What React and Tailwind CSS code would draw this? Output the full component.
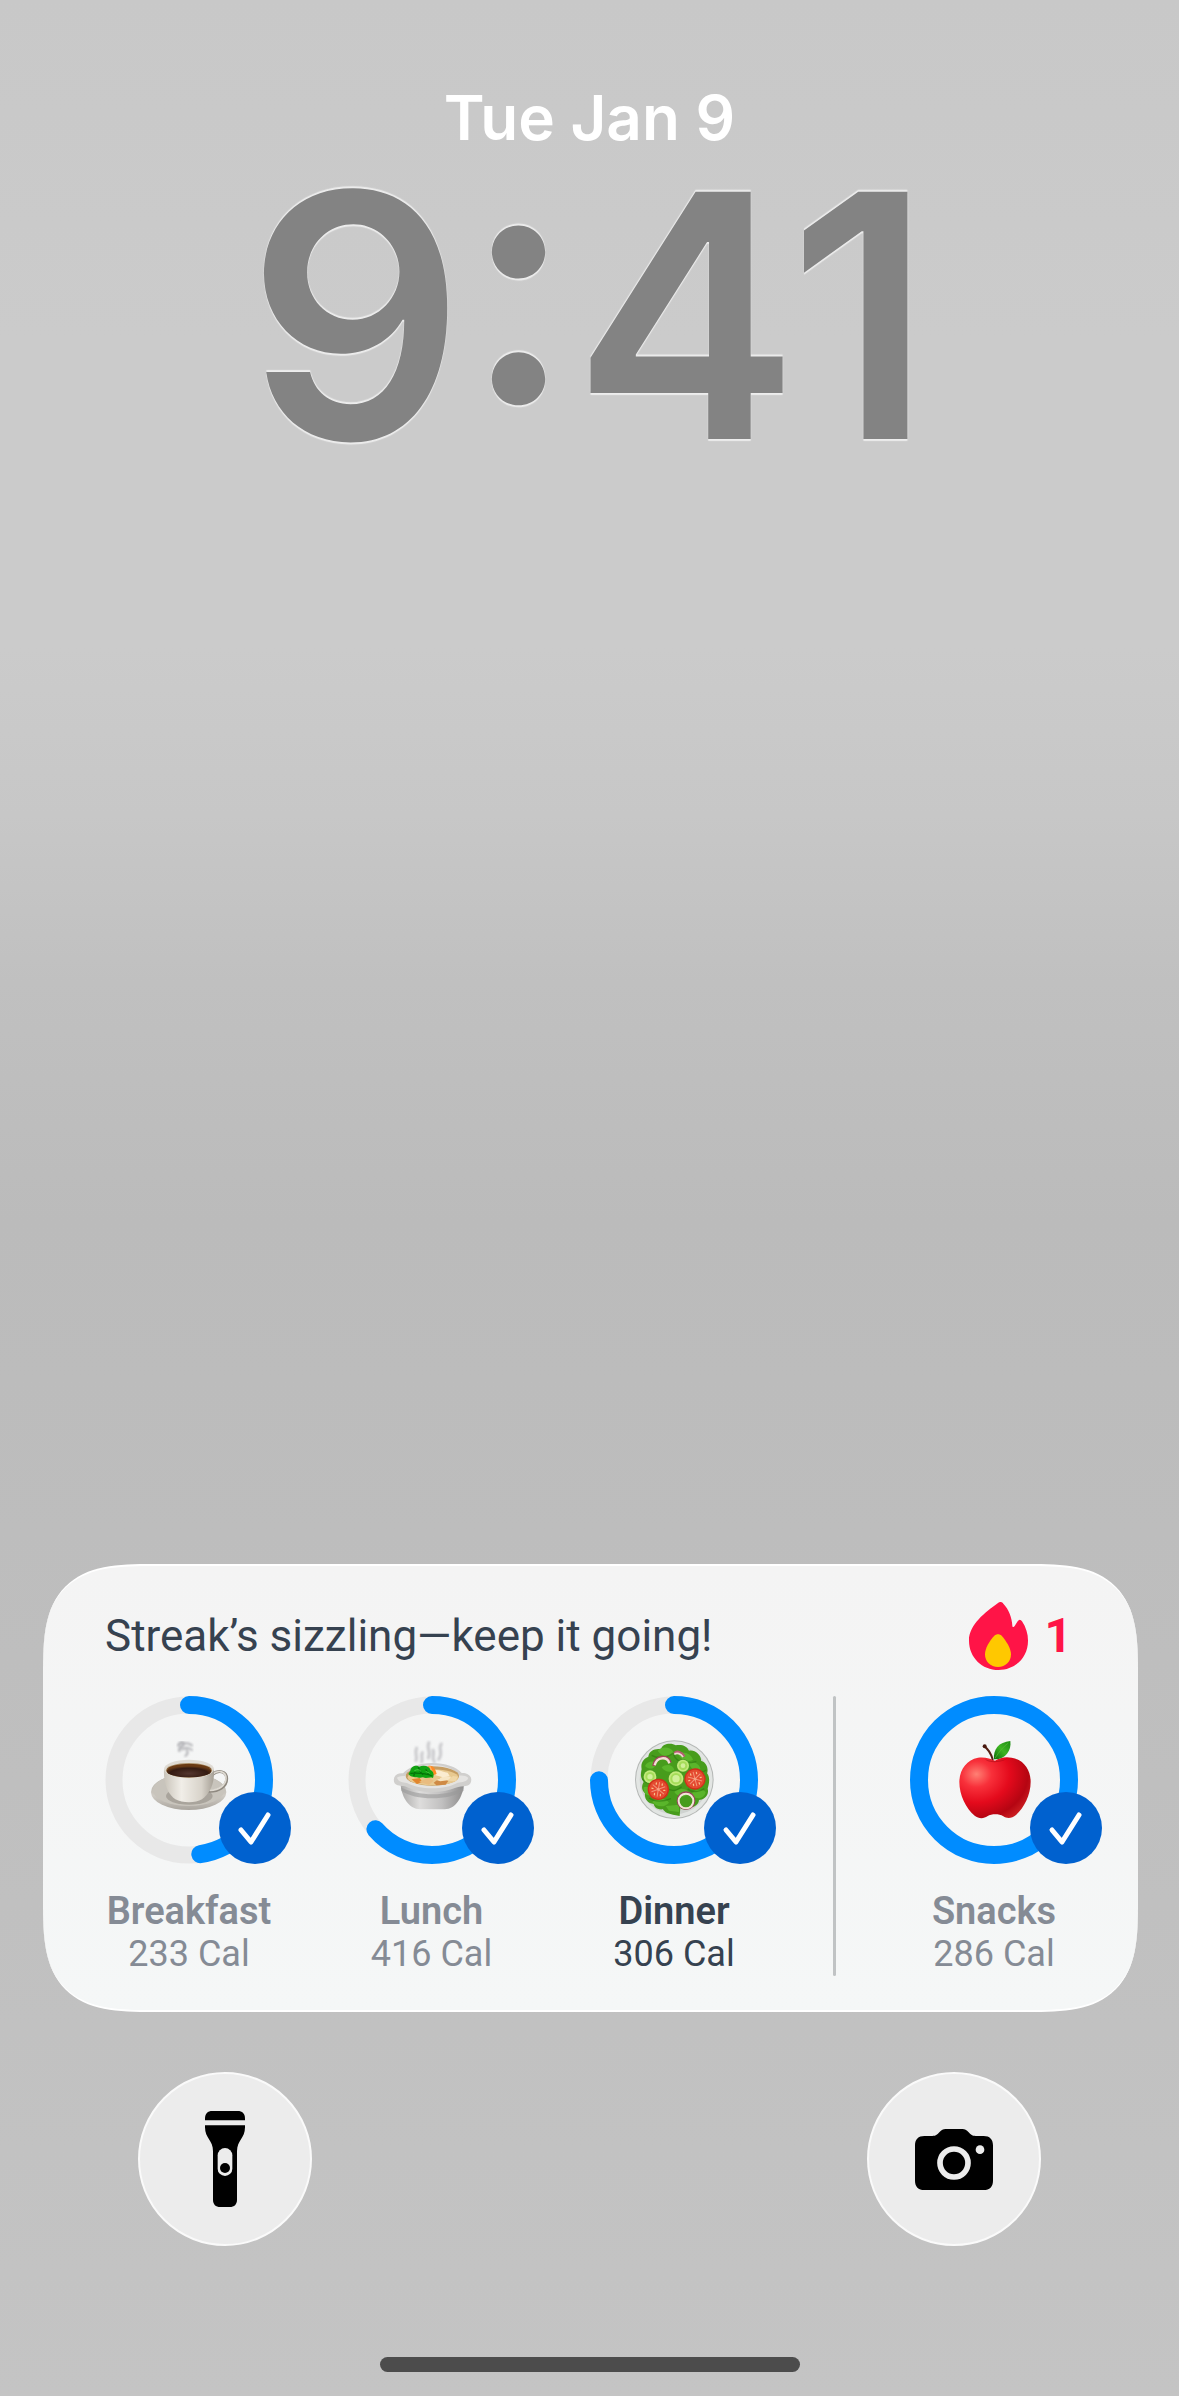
import { clsx } from 'clsx'

const RING_RADIUS = 75
const RING_LENGTH = 2 * Math.PI * RING_RADIUS

const meals = [
  { name: 'Breakfast', calories: 233, progress: 0.475, Icon: CoffeeIcon },
  { name: 'Lunch', calories: 416, progress: 0.635, Icon: SoupIcon },
  { name: 'Dinner', calories: 306, progress: 0.748, Icon: SaladIcon, current: true },
]

const snacks = { name: 'Snacks', calories: 286, progress: 1, Icon: AppleIcon }

function CoffeeIcon() {
  return (
    <g transform="translate(25 24) scale(0.33333)">
      <defs>
        <linearGradient id="cup" x1="0" x2="1">
          <stop offset="0" stopColor="#c9c4ba" />
          <stop offset="0.35" stopColor="#f1eee8" />
          <stop offset="0.75" stopColor="#d8d3ca" />
          <stop offset="1" stopColor="#a59f95" />
        </linearGradient>
        <linearGradient id="saucer" x1="0" y1="0" x2="0" y2="1">
          <stop offset="0" stopColor="#aaa59d" />
          <stop offset="0.6" stopColor="#cfcbc4" />
          <stop offset="1" stopColor="#aaa59e" />
        </linearGradient>
        <radialGradient id="coffee" cx="0.5" cy="0.7" r="0.6">
          <stop offset="0" stopColor="#54362f" />
          <stop offset="0.7" stopColor="#351b12" />
          <stop offset="1" stopColor="#6b3d17" />
        </radialGradient>
        <filter id="steam">
          <feGaussianBlur stdDeviation="3" />
        </filter>
      </defs>
      <g fill="none" stroke="#b4b4b8" strokeLinecap="round" filter="url(#steam)">
        <path d="M145 76c6-12 15-10 16-4s-15 9-13 20" strokeWidth="8" />
        <path d="M164 70c8-2 14 0 22 6M158 88c8-6 14-8 28 2M166 108c8-6 8-12 4-18" strokeWidth="6" />
      </g>
      <ellipse cx="176" cy="216" rx="113" ry="54" fill="url(#saucer)" />
      <ellipse cx="176" cy="210" rx="108" ry="48" fill="#c8c4bc" />
      <ellipse cx="178" cy="228" rx="70" ry="26" fill="#8f8a81" opacity="0.55" />
      <path d="M247 164c18-16 43-10 43 12 0 24-24 38-52 38" fill="none" stroke="#8f8980" strokeWidth="9" strokeLinecap="round" />
      <path d="M247 163c18-15 41-9 41 12 0 22-22 35-48 36" fill="none" stroke="#dedad2" strokeWidth="5" strokeLinecap="round" />
      <path d="M102 148c-2 34 8 72 34 90 22 12 60 12 80 0 28-20 38-56 36-90z" fill="url(#cup)" />
      <ellipse cx="177" cy="147" rx="75" ry="28" fill="#dfdbd4" />
      <ellipse cx="177" cy="151" rx="69" ry="22" fill="#a78a62" />
      <ellipse cx="177" cy="153" rx="67" ry="19" fill="url(#coffee)" />
      <path d="M110 148c15-20 118-22 135 0-22-12-110-12-135 0z" fill="#6a3a14" />
    </g>
  )
}

function SoupIcon() {
  return (
    <g transform="translate(21 24) scale(0.33333)">
      <defs>
        <linearGradient id="bowl" x1="0" x2="1">
          <stop offset="0" stopColor="#aaa9a8" />
          <stop offset="0.3" stopColor="#dedddc" />
          <stop offset="0.65" stopColor="#c1c0c0" />
          <stop offset="1" stopColor="#8e8d8d" />
        </linearGradient>
      </defs>
      <g fill="none" stroke="#cbcbce" strokeWidth="9" strokeLinecap="round" filter="url(#steam)">
        <path d="M143 84c-8 16 4 22-2 38M160 98c-5 10 2 18-2 28M180 68c-10 16 8 26-2 46" />
        <path d="M192 90c6 12-6 20 4 36M217 72c-12 14 8 24-8 46" />
      </g>
      <path d="M95 196c4 38 26 72 58 72h74c32 0 52-34 58-72z" fill="url(#bowl)" />
      <path d="M96 202c50 28 142 28 188 0v10c-44 30-146 30-187 0z" fill="#999" opacity="0.6" />
      <path d="M76 172c4-10 16-14 26-12 18-20 50-31 88-31s72 11 88 30c12-1 24 4 28 14 3 12-2 21-12 24-14 2-24 2-34 6-38 17-104 17-142 0-12-5-20-5-32-7-10-4-14-12-10-24z" fill="#d0cfcd" />
      <path d="M84 173c6-5 16-5 24-5 12-19 46-33 82-33s72 14 82 32c10-1 20 1 26 7-4 12-18 12-32 14-40 22-112 22-152 1-14-2-26-3-30-16z" fill="#e5e4e2" />
      <ellipse cx="190" cy="168" rx="80" ry="29" fill="#c59d62" />
      <ellipse cx="192" cy="172" rx="76" ry="24" fill="#e8c990" />
      <path d="M118 172l14-10 20 14-8 14z" fill="#f0c987" />
      <path d="M128 178l24-4 8 12-16 6z" fill="#e1862e" />
      <path d="M150 186l28-14 16 10-14 12z" fill="#e9bc80" />
      <path d="M194 188l18-14 28 6-10 14-28 2z" fill="#cf8a45" />
      <path d="M202 180l24-12 20 2-4 10-28 4z" fill="#f7e6c4" />
      <path d="M198 150c16-2 28 8 38 8l6 10-20 4-22-6z" fill="#faecd0" />
      <path d="M234 182l18-14 14 2-6 14z" fill="#f0d7a6" />
      <path d="M177 138c12-4 22 4 26 24l-12 4c-2-12-6-18-14-28z" fill="#ff8a24" />
      <path d="M182 138l10 24" stroke="#ffb261" strokeWidth="4" />
      <path d="M124 152c2-16 20-18 26-12 18-6 32 0 34 10 10 4 12 14 8 24-12-4-20 4-30-2-12 4-18-2-24 0-10-2-16-4-20-10z" fill="#11a312" />
      <path d="M124 160c24-2 42-2 66 8M148 142c4 10 6 16 14 22M170 148l10 16M138 156l-4 12" fill="none" stroke="#057308" strokeWidth="4" />
      <path d="M136 152c10-4 14-4 20 2M170 154l12 6" stroke="#45cc3f" strokeWidth="3" fill="none" />
    </g>
  )
}

function TomatoSlice({ x, y, angle }) {
  return (
    <g transform={`translate(${x} ${y}) rotate(${angle})`}>
      <circle r="32" fill="#cf2f1a" />
      <circle r="28" fill="#e44a30" />
      <path d="M0-22V22M-19-11L19 11M-19 11L19-11" stroke="#f2937a" strokeWidth="3" />
      <g fill="#f9c48e">
        <ellipse cx="9" cy="-16" rx="2" ry="4" />
        <ellipse cx="-9" cy="-16" rx="2" ry="4" />
        <ellipse cx="9" cy="16" rx="2" ry="4" />
        <ellipse cx="-9" cy="16" rx="2" ry="4" />
        <ellipse cx="18" cy="0" rx="4" ry="2" />
        <ellipse cx="-18" cy="0" rx="4" ry="2" />
      </g>
      <circle r="4" fill="#f7a283" />
    </g>
  )
}

function CucumberSlice({ x, y, r }) {
  return (
    <g transform={`translate(${x} ${y})`}>
      <circle r={r} fill="#4e9a25" />
      <circle r={r - 2} fill="#c3ea7c" />
      <circle r={r - 7} fill="#a5dc59" />
      <circle r={r - 13} fill="#d1f09a" />
    </g>
  )
}

function SaladIcon() {
  return (
    <g transform="translate(19 14) scale(0.33333)">
      <circle cx="196" cy="209" r="118" fill="#b5b8b6" />
      <circle cx="196" cy="209" r="115" fill="#e2e5e3" />
      <circle cx="196" cy="209" r="104" fill="#cfd3d0" />
      <path d="M118 140c2-18 22-26 38-22 4-20 34-20 44-12 18-4 34 2 40 16 18-4 38 14 36 30 20 6 22 28 18 38 12 16 4 36 2 46 6 22-14 34-26 34-2 18-20 24-30 20-6 12-22 8-26 4l-2 24-20-4c-14-2-26-8-30-16-22 2-26-10-28-16-20-2-28-18-26-32-14-14-8-26-4-34-12-16-8-28-6-38-4-20 6-32 20-38z" fill="#479c1c" />
      <g fill="#5ab52b">
        <path d="M146 122c14-14 40-12 48 6-12 14-36 14-48-6z" />
        <path d="M206 130c20-8 42 2 46 20-18 8-38 0-46-20z" />
        <path d="M108 168c6-14 24-18 34-8-2 16-20 22-34 8z" />
        <path d="M240 158c16-6 34 6 34 20-14 8-30 0-34-20z" />
        <path d="M104 232c12-6 22 2 22 24-14 4-24-10-22-24z" />
        <path d="M130 276c14-14 42-12 50 2-12 14-36 16-50-2z" />
        <path d="M196 246c14-14 40-10 46 4-14 14-36 12-46-4z" />
        <path d="M246 254c8-16 32-20 44-8-4 20-26 26-44 8z" />
        <path d="M158 172c14-12 34-8 38 8-12 10-30 6-38-8z" />
        <path d="M170 288l40-4v22l-30-4z" />
      </g>
      <g fill="none" stroke="#2c780f" strokeWidth="4" opacity="0.6">
        <path d="M128 136c20 12 50 6 66-8M194 134c8 20 34 32 68 20M100 206c14 20 24 12 38 6" />
        <path d="M164 224c18 24 36 20 54 6M120 264c20 14 46 10 66 2M236 236c14 14 36 10 50 0M260 180c14 8 24 6 32 0" />
      </g>
      <path d="M134 168c6-32 44-34 50-10" fill="none" stroke="#9e455a" strokeWidth="9" />
      <path d="M137 166c6-26 38-28 44-6" fill="none" stroke="#f3ddd5" strokeWidth="7" />
      <path d="M196 130c8-8 22-4 30 10" fill="none" stroke="#b65c72" strokeWidth="8" />
      <path d="M196 133c8-6 20-2 26 8" fill="none" stroke="#f1d6d3" strokeWidth="5" />
      <CucumberSlice x={222} y={167} r={20} />
      <CucumberSlice x={123} y={200} r={21} />
      <CucumberSlice x={201} y={206} r={24} />
      <TomatoSlice x={148} y={238} angle={10} />
      <TomatoSlice x={258} y={207} angle={-15} />
      <circle cx="231" cy="272" r="25" fill="none" stroke="#97445b" strokeWidth="6" />
      <circle cx="231" cy="273" r="22" fill="none" stroke="#f2e4d6" strokeWidth="6" />
    </g>
  )
}

function AppleIcon() {
  return (
    <g transform="translate(20 14) scale(0.33333)">
      <defs>
        <radialGradient id="apple" cx="0.24" cy="0.28" r="0.85">
          <stop offset="0" stopColor="#ff8074" />
          <stop offset="0.25" stopColor="#f8303a" />
          <stop offset="0.55" stopColor="#e40a1c" />
          <stop offset="0.85" stopColor="#b50512" />
          <stop offset="1" stopColor="#c91c20" />
        </radialGradient>
        <linearGradient id="leaf" x1="0" y1="1" x2="1" y2="0">
          <stop offset="0" stopColor="#0a6b09" />
          <stop offset="0.5" stopColor="#3db522" />
          <stop offset="1" stopColor="#1d8a14" />
        </linearGradient>
      </defs>
      <path d="M195 152c14-9 32-13 50-9 36 6 57 37 57 72 0 40-20 78-44 100-12 11-28 11-38 4-14-8-34-8-48 0-10 7-26 8-38-2-26-22-46-62-46-102 1-36 22-66 56-72 20-3 38 3 51 9z" fill="url(#apple)" />
      <path d="M164 147c14 8 52 9 68-2-12 13-54 17-68 2z" fill="#8e0710" opacity="0.4" />
      <path d="M163 109c14 10 20 22 25 39" fill="none" stroke="#552014" strokeWidth="6" strokeLinecap="round" />
      <circle cx="164" cy="109" r="6" fill="#48190f" />
      <path d="M192 148c-3-30 14-52 49-55 4 28-14 56-49 55z" fill="url(#leaf)" />
      <path d="M195 145c12-20 24-34 40-46" fill="none" stroke="#58bd35" strokeWidth="2" />
    </g>
  )
}

function FlameIcon() {
  return (
    <svg className="w-[59px] h-[68px]" viewBox="0 0 177 204" aria-hidden="true">
      <path d="M86 4c6-5 12-5 17 1 16 16 26 42 27 66 0 5 4 6 7 1l9-14c4-6 9-6 13 0 12 18 18 38 18 58 0 50-38 88-88 88S0 166 0 116C0 68 50 30 86 4z" fill="#ff1447" />
      <path d="M76 101c6-6 16-6 22 0 14 16 28 38 28 56 0 22-16 38-39 38s-39-16-39-38c0-18 13-40 28-56z" fill="#ffc800" />
    </svg>
  )
}

function FlashlightIcon() {
  return (
    <svg className="w-[40px] h-[96px]" viewBox="0 0 120 288" aria-hidden="true">
      <path d="M0 28V22C0 8 8 0 22 0h76c14 0 22 8 22 22v6z" />
      <path d="M0 43h120v6c0 34-24 38-24 72v145c0 14-8 22-22 22H46c-14 0-22-8-22-22V121C24 87 0 83 0 49z" />
      <rect x="38" y="111" width="44" height="84" rx="22" fill="#ececec" />
      <circle cx="60" cy="171" r="15" />
    </svg>
  )
}

function CameraIcon() {
  return (
    <svg className="w-[78px] h-[61px]" viewBox="0 0 234 183" aria-hidden="true">
      <path d="M28 21h24c12 0 15-5 21-11C80 3 84 0 92 0h50c8 0 12 3 19 10 6 6 9 11 21 11h24c18 0 28 10 28 28v106c0 18-10 28-28 28H28c-18 0-28-10-28-28V49c0-18 10-28 28-28z" />
      <circle cx="117" cy="102" r="42" fill="none" stroke="#ececec" strokeWidth="17" />
      <circle cx="195" cy="62" r="13" fill="#ececec" />
    </svg>
  )
}

function ProgressRing({ progress, children }) {
  return (
    <div className="relative size-[168px]">
      <svg className="size-full" viewBox="0 0 168 168" aria-hidden="true">
        <circle cx="84" cy="84" r={RING_RADIUS} fill="none" stroke="#e8e8e8" strokeWidth="17" />
        <circle
          cx="84"
          cy="84"
          r={RING_RADIUS}
          fill="none"
          stroke="#008cff"
          strokeWidth="18"
          strokeLinecap="round"
          strokeDasharray={`${RING_LENGTH * progress} ${RING_LENGTH}`}
          transform="rotate(-90 84 84)"
        />
        {children}
      </svg>
      <span className={clsx(
        'absolute bottom-0 size-[72px] rounded-full bg-[#0061cf]',
        progress === 1 ? '-right-6' : '-right-[18px]'
      )}>
        <svg className="size-full" viewBox="0 0 72 72" aria-hidden="true">
          <path d="M22 38l10 12L49 23" fill="none" stroke="#fff" strokeWidth="5" strokeLinecap="round" strokeLinejoin="round" />
        </svg>
      </span>
    </div>
  )
}

function Meal({ name, calories, progress, Icon, current = false }) {
  return (
    <div className="w-[168px] flex flex-col items-center gap-[26px]">
      <ProgressRing progress={progress}>
        <Icon />
      </ProgressRing>
      <div className={clsx(
        'text-center leading-[43px] whitespace-nowrap',
        current ? 'text-[#364250]' : 'text-[#858b95]'
      )}>
        <h3 className="text-[38px] font-semibold">{name}</h3>
        <p className="text-[36px]">{calories} Cal</p>
      </div>
    </div>
  )
}

function RoundButton({ label, children }) {
  return (
    <button
      type="button"
      aria-label={label}
      className="size-[174px] rounded-full bg-[#ececec] border-2 border-[#fafafa] flex items-center justify-center"
    >
      {children}
    </button>
  )
}

export default function App() {
  return (
    <main className="min-h-screen flex flex-col bg-[linear-gradient(to_bottom,#c8c8c8_0%,#cbcbcb_14%,#cbcbcb_27%,#c7c7c7_34%,#c0c0c0_41%,#bbbbbb_51%,#bdbdbd_64%,#c4c4c4_100%)]">
      <header className="pt-[78px] flex flex-col items-center font-['Inter',sans-serif] font-semibold">
        <p className="text-[62px] leading-[80px] text-white">Tue Jan 9</p>
        <time className="text-[340px] leading-[316px] text-[#838383] [text-shadow:0_-2px_1px_#ededed,0_2px_1px_#ededed]">9:41</time>
      </header>

      <section className="mt-auto ml-[43px] mr-[41px] pt-9 pb-[34px] pl-[62px] pr-[60px] rounded-[76px] supports-[corner-shape:squircle]:rounded-[110px] supports-[corner-shape:squircle]:[corner-shape:superellipse(1.6)] bg-linear-to-b from-[#f4f4f4] to-[#f5f7f7] border-y-2 border-white font-['Roboto',sans-serif]">
        <div className="flex items-center justify-between pb-[26px]">
          <h2 className="text-[44px] leading-[50px] text-[#364250]">Streak’s sizzling—keep it going!</h2>
          <div className="flex items-center gap-[16px] pr-[6px] text-[#ff1447]">
            <FlameIcon />
            <span className="text-[48px] leading-[56px] font-bold">1</span>
          </div>
        </div>
        <div className="flex justify-between">
          {meals.map((meal) => (
            <Meal key={meal.name} {...meal} />
          ))}
          <div className="w-[3px] rounded-full bg-[#c0c3c4]" />
          <Meal {...snacks} />
        </div>
      </section>

      <nav className="mt-[60px] px-[138px] flex justify-between">
        <RoundButton label="Flashlight">
          <FlashlightIcon />
        </RoundButton>
        <RoundButton label="Camera">
          <CameraIcon />
        </RoundButton>
      </nav>

      <div className="mt-[111px] mb-6 self-center w-[420px] h-[15px] rounded-full bg-[#4c4c4c]" />
    </main>
  )
}
